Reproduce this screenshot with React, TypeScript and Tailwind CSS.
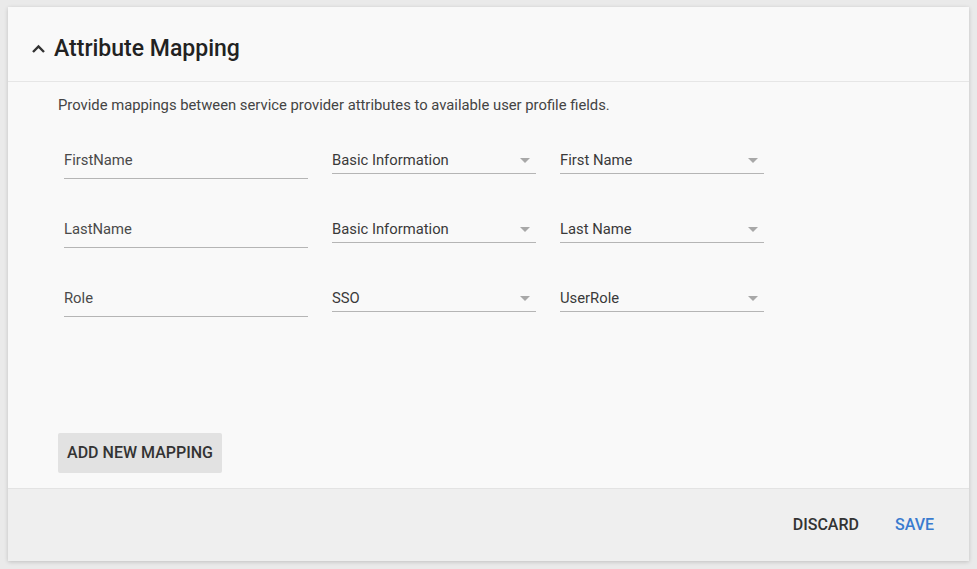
import React from 'react'

const rows = [
  { attr: 'FirstName', group: 'Basic Information', field: 'First Name' },
  { attr: 'LastName', group: 'Basic Information', field: 'Last Name' },
  { attr: 'Role', group: 'SSO', field: 'UserRole' },
]

function SelectField({ value }: { value: string }) {
  return (
    <div className="flex w-[204px] items-center justify-between border-b border-[#b5b5b5] pb-[3px] text-[14.8px] leading-[20px]">
      <span className="text-[#3a3a3a]">{value}</span>
      <svg width="10" height="5" viewBox="0 0 10 5" className="mr-[6px]">
        <path d="M0 0 L10 0 L5 5 Z" fill="#a8a8a8" />
      </svg>
    </div>
  )
}

export default function App() {
  return (
    <div
      className="min-h-[569px] w-full bg-[#eaeaea] pl-[8px] pt-[7px]"
      style={{ fontFamily: 'Roboto, "Liberation Sans", sans-serif' }}
    >
      <div className="flex h-[554px] w-[961px] flex-col bg-[#f9f9f9] shadow-[0_1px_4px_rgba(0,0,0,0.18)]">
        <div className="flex h-[75px] items-center border-b border-[#e6e6e6] pl-[23px] pt-[9px]">
          <svg width="15" height="10" viewBox="0 0 15 10" className="mr-[8px]">
            <polyline points="2,8 7.5,2.5 13,8" fill="none" stroke="#333" strokeWidth="2.4" />
          </svg>
          <h2 className="text-[23px] font-medium leading-none text-[#222]">Attribute Mapping</h2>
        </div>

        <div className="flex flex-1 flex-col px-[50px] pb-[15px] pt-[13px]">
          <p className="text-[14.8px] leading-[20px] text-[#444]">
            Provide mappings between service provider attributes to available user profile fields.
          </p>

          <div className="mt-[35px] flex flex-col gap-[40px] pl-[6px]">
            {rows.map((r) => (
              <div key={r.attr} className="flex items-start gap-[24px]">
                <div className="w-[244px] border-b border-[#b5b5b5] pb-[8px] text-[14.8px] leading-[20px]">
                  <span className="text-[#4a4a4a]">{r.attr}</span>
                </div>
                <SelectField value={r.group} />
                <SelectField value={r.field} />
              </div>
            ))}
          </div>

          <button className="mt-auto h-[40px] w-[164px] rounded-[2px] bg-[#e2e2e2] text-[16px] font-medium uppercase text-[#333]">
            Add New Mapping
          </button>
        </div>

        <div className="flex h-[73px] items-center justify-end gap-[36px] border-t border-[#e3e3e3] bg-[#efefef] pr-[35px]">
          <button className="text-[16px] font-medium uppercase text-[#333]">Discard</button>
          <button className="text-[16px] font-medium uppercase text-[#3a7bcf]">Save</button>
        </div>
      </div>
    </div>
  )
}
